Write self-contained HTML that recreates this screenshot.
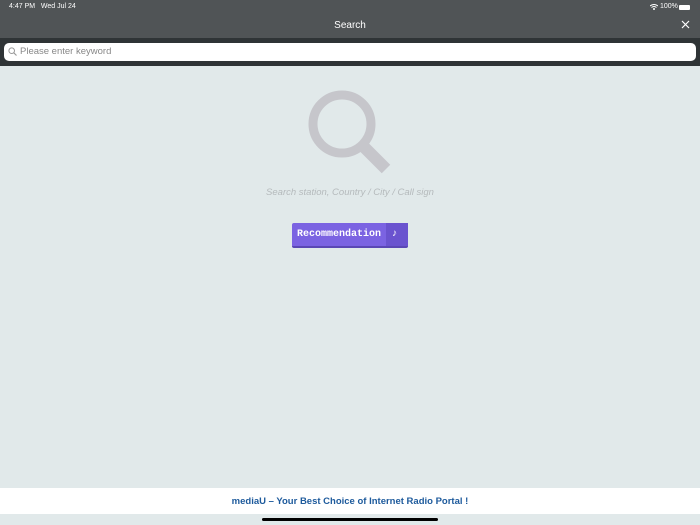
<!DOCTYPE html>
<html><head><style>
body{margin:0;width:700px;height:525px;overflow:hidden;background:#e1e9ea;font-family:"Liberation Sans",sans-serif;position:relative}
.top{position:absolute;left:0;top:0;width:700px;height:38px;background:#505456}
.sb{position:absolute;left:0;top:38px;width:700px;height:28px;background:#2f3436}
.inp{position:absolute;left:4px;top:43px;width:692px;height:18px;background:#fff;border-radius:5px}
.t{position:absolute;color:#fff}
</style></head><body>
<div class="top"></div>
<div class="t" style="left:9px;top:3px;font-size:7px">4:47 PM&nbsp;&nbsp; Wed Jul 24</div>
<div class="t" style="left:660px;top:3px;font-size:7px">100%</div>
<svg style="position:absolute;left:650px;top:4px" width="8" height="6" viewBox="0 0 8 6"><path d="M0 2Q4 -1 8 2M1.5 3.5Q4 1.5 6.5 3.5" stroke="#fff" fill="none" stroke-width="1"/><circle cx="4" cy="5" r="1" fill="#fff"/></svg>
<div style="position:absolute;left:679px;top:5px;width:11px;height:5px;background:#fff;border-radius:1px"></div>
<div class="t" style="left:0;width:700px;text-align:center;top:20px;font-size:10px">Search</div>
<svg style="position:absolute;left:681px;top:20px" width="9" height="9"><path d="M1 1L8 8M8 1L1 8" stroke="#fff" stroke-width="1.2"/></svg>
<div class="sb"></div>
<div class="inp"></div>
<svg style="position:absolute;left:8px;top:47px" width="9" height="9"><circle cx="3.7" cy="3.7" r="2.8" stroke="#999" fill="none" stroke-width="1"/><path d="M5.8 5.8L8.5 8.5" stroke="#999" stroke-width="1.1"/></svg>
<div style="position:absolute;left:20px;top:46px;font-size:9.5px;color:#888">Please enter keyword</div>
<svg style="position:absolute;left:300px;top:88px" width="100" height="95"><circle cx="42" cy="36" r="29" stroke="#c6c6cb" stroke-width="9" fill="none"/><path d="M64 59L86 81" stroke="#c6c6cb" stroke-width="12"/></svg>
<div style="position:absolute;left:0;width:700px;text-align:center;top:187px;font-size:9.5px;color:#b5babc;font-style:italic">Search station, Country / City / Call sign</div>
<div style="position:absolute;left:292px;top:223px;width:116px;height:23px;background:#7b63e2;border-bottom:2px solid #5a47b5;border-radius:2px"></div>
<div style="position:absolute;left:386px;top:223px;width:22px;height:23px;background:#6a53cf"></div>
<div style="position:absolute;left:292px;width:94px;text-align:center;top:229px;font-size:10px;color:#fff;font-weight:bold;font-family:'Liberation Mono',monospace">Recommendation</div>
<div style="position:absolute;left:392px;top:228px;font-size:10px;color:#fff">♪</div>
<div style="position:absolute;left:0;top:488px;width:700px;height:26px;background:#fff"></div>
<div style="position:absolute;left:0;width:700px;text-align:center;top:496px;font-size:9.5px;color:#1d5a9c;font-weight:bold">mediaU – Your Best Choice of Internet Radio Portal !</div>
<div style="position:absolute;left:262px;top:518px;width:176px;height:3px;background:#000;border-radius:2px"></div>
</body></html>
